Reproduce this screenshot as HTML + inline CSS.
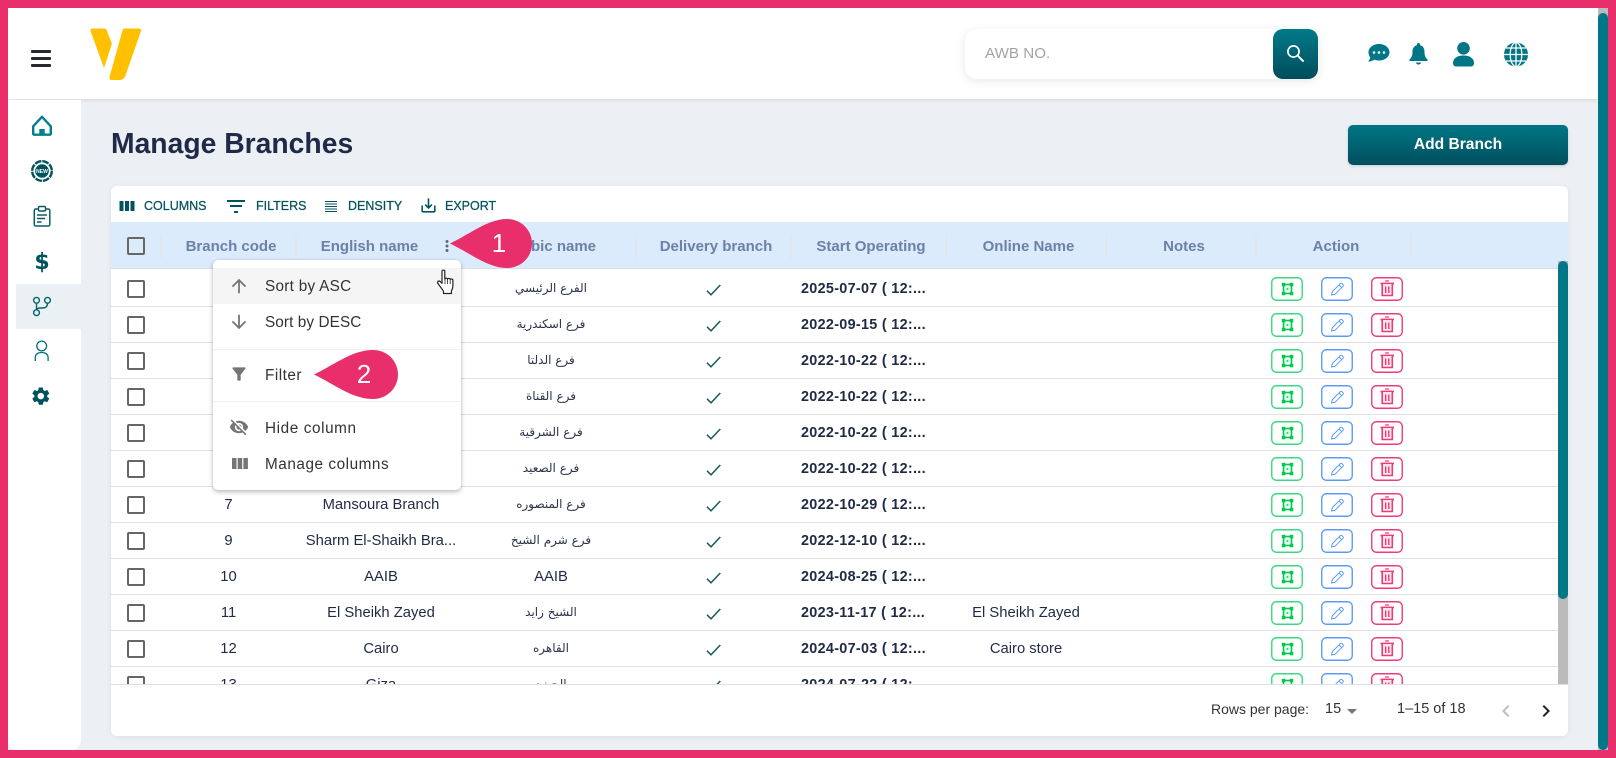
<!DOCTYPE html>
<html><head><meta charset="utf-8"><title>Manage Branches</title>
<style>
*{box-sizing:border-box;margin:0;padding:0}
html,body{width:1616px;height:758px;overflow:hidden;background:#ecf0f4;font-family:"Liberation Sans",sans-serif}
.a{position:absolute}
svg{display:block;overflow:visible}
.tb{position:absolute;top:197px;font-size:12.5px;font-weight:400;color:#03535f;line-height:18px;white-space:nowrap;-webkit-text-stroke:.25px #03535f}
.th{position:absolute;top:222px;height:47px;line-height:50px;text-align:center;font-size:15px;font-weight:700;color:#6d80a8;white-space:nowrap}
.sp{position:absolute;top:234px;width:2px;height:24px;background:#e0e6ee}
.r{position:absolute;left:0;width:1447px;height:36px;border-bottom:1px solid #e0e0e0;font-size:14.8px;color:#1f2a44;line-height:37px;white-space:nowrap}
.r span{position:absolute;top:0;text-align:center}
.cb{position:absolute;width:18px;height:18px;border:2px solid #666;border-radius:2px;background:#fff}
.r .cb{left:16px;top:9px}
.c1{left:50px;width:135px}.c2{left:185px;width:170px}
.r .c3{top:-1px;left:355px;width:170px;font-family:"DejaVu Sans",sans-serif;font-size:12px;color:#2a3348}
.r .c3.e{top:0;font-family:"Liberation Sans",sans-serif;font-size:14.8px;color:#1f2a44}
.c5{left:690px;font-weight:700;text-align:left!important;font-size:14.4px;letter-spacing:.3px}
.c6{left:835px;width:160px}
.r svg{position:absolute}
.ck{left:595px;top:13px}
.bg,.bb,.br{top:6px}
.bg{left:1160px}.bb{left:1210px}.br{left:1260px}
.m{position:absolute;left:265px;font-size:15.3px;color:#333;line-height:20px;white-space:nowrap}
.mi{position:absolute;left:227px}
</style></head>
<body>
<svg width="0" height="0" style="position:absolute">
<defs>
<symbol id="g" viewBox="0 0 32 24"><rect x=".75" y=".75" width="30.5" height="22.5" rx="4.5" fill="#fff" stroke="#3ad880" stroke-width="1.4"/><rect x="12.5" y="7.5" width="8" height="9" fill="#e8fbf0" stroke="#00c853" stroke-width="1.6"/><rect x="10.8" y="5.8" width="3.5" height="3.5" fill="#00c853"/><rect x="18.8" y="5.8" width="3.5" height="3.5" fill="#00c853"/><rect x="10.8" y="14.8" width="3.5" height="3.5" fill="#00c853"/><rect x="18.8" y="14.8" width="3.5" height="3.5" fill="#00c853"/><rect x="15.7" y="11.2" width="1.6" height="1.6" fill="#00c853"/></symbol>
<symbol id="b" viewBox="0 0 32 24"><rect x=".75" y=".75" width="30.5" height="22.5" rx="4.5" fill="#fff" stroke="#5c9cf6" stroke-width="1.4"/><path d="M10.5 18l.8-3.4 8-8a1.2 1.2 0 0 1 1.7 0l1 1a1.2 1.2 0 0 1 0 1.7l-8 8zM18 8l2.8 2.8" fill="none" stroke="#5c9cf6" stroke-width="1"/></symbol>
<symbol id="t" viewBox="0 0 32 24"><rect x=".75" y=".75" width="30.5" height="22.5" rx="4.5" fill="#fff" stroke="#f03a78" stroke-width="1.4"/><path d="M14 4h4" stroke="#f03a78" stroke-width="1.2"/><path d="M9.5 6.5h13.500" stroke="#f03a78" stroke-width="1.8"/><path d="M11.2 7v11.500h10.100V7" fill="#fde7ef" stroke="#f03a78" stroke-width="1.6"/><path d="M14.7 9.5v6.500M17.8 9.5v6.500" stroke="#f03a78" stroke-width="1.4"/></symbol>
<symbol id="c" viewBox="0 0 15 12"><path d="M1 6.8l4 4L14.3 1" fill="none" stroke="#1c5a5a" stroke-width="1.5"/></symbol>
</defs>
</svg>

<!-- top bar -->
<div class="a" style="left:8px;top:8px;width:1590px;height:91px;background:#fff;box-shadow:0 1px 4px rgba(0,0,0,.1)"></div>
<div class="a" style="left:31px;top:50px;width:20px;height:3px;background:#262a30;border-radius:1px"></div>
<div class="a" style="left:31px;top:57px;width:20px;height:3px;background:#262a30;border-radius:1px"></div>
<div class="a" style="left:31px;top:64px;width:20px;height:3px;background:#262a30;border-radius:1px"></div>
<svg class="a" style="left:85px;top:24px" width="60" height="60" viewBox="85 24 60 60"><path d="M92 28.5h12.5a2 2 0 0 1 1.9 1.2l5.3 13.3a2 2 0 0 1 0 1.4L104 68 90.6 31.2a2 2 0 0 1 1.4-2.7z" fill="#ffc000"/><path d="M124.5 28.5h14.5a2 2 0 0 1 1.9 2.7L125.5 75.5c-.8 2.5-3 4.5-6 4.5h-8c-1.6 0-2.6-1.6-2-3L122.6 30a2 2 0 0 1 1.9-1.5z" fill="#ffc000"/></svg>

<div class="a" style="left:965px;top:29px;width:353px;height:50px;background:#fff;border-radius:12px;box-shadow:0 2px 10px rgba(0,0,0,.1)"></div>
<div class="a" style="left:985px;top:43px;font-size:15.2px;color:#a3a3a3;line-height:22px">AWB NO.</div>
<div class="a" style="left:1273px;top:29px;width:45px;height:50px;border-radius:10px;background:linear-gradient(180deg,#007a8a,#004d5a)"></div>
<svg class="a" style="left:1284px;top:42px" width="24" height="24" viewBox="0 0 24 24"><circle cx="9.500" cy="9.500" r="5.600" fill="none" stroke="#fff" stroke-width="1.700"/><path d="M13.600 13.600l6 6" stroke="#fff" stroke-width="1.900"/></svg>

<svg class="a" style="left:1360px;top:37px" width="170" height="36" viewBox="1360 36 170 36" fill="#007686">
<path d="M1379 43c5.800 0 10.500 3.700 10.500 8.200s-4.700 8.300-10.500 8.300c-1.700 0-3.300-.3-4.700-.9-2 1.300-4 1.900-6.300 2 1.300-1.300 2-2.700 2.300-4.200-1.100-1.400-1.800-3.200-1.800-5.200 0-4.500 4.700-8.200 10.500-8.200z"/>
<circle cx="1374" cy="51.500" r="1.300" fill="#fff"/><circle cx="1379" cy="51.500" r="1.300" fill="#fff"/><circle cx="1384" cy="51.500" r="1.300" fill="#fff"/>
<path d="M1418.500 42c1 0 1.700.8 1.700 1.800v.5c2.800.8 4.300 3.300 4.300 6.200 0 4 .8 5.800 3 8v1.500h-18v-1.500c2.200-2.200 3-4 3-8 0-2.900 1.500-5.400 4.300-6.200v-.5c0-1 .7-1.800 1.700-1.800zM1416 61.500h5c0 1.100-1.100 2-2.500 2s-2.500-.9-2.500-2z"/>
<circle cx="1463.500" cy="47.300" r="6.300"/>
<path d="M1453 62c0-4.500 4-7.500 10.500-7.500s10.500 3 10.500 7.500c0 2-1.200 3.500-3 3.500h-15c-1.800 0-3-1.500-3-3.500z"/>
<circle cx="1516" cy="53.500" r="12"/>
<g fill="none" stroke="#fff" stroke-width="1.300"><path d="M1516 41.500v24M1504 53.500h24M1506 47h20M1506 60h20"/><ellipse cx="1516" cy="53.500" rx="5.800" ry="12"/></g>
</svg>

<div class="a" style="left:1598px;top:8px;width:10px;height:742px;background:#bbb"></div>
<div class="a" style="left:1598px;top:13px;width:10px;height:737px;background:#007686;border-radius:5px"></div>

<!-- sidebar -->
<div class="a" style="left:8px;top:100px;width:73px;height:650px;background:#fff;border-radius:0 0 10px 10px"></div>
<div class="a" style="left:16px;top:284px;width:65px;height:45px;background:#ebf0f4"></div>
<svg class="a" style="left:8px;top:100px" width="73" height="320" viewBox="8 100 73 320">
<path d="M33.200 126.300L42 116.800l8.800 9.500v7.500c0 .5-.4 .9-.9 .9H34.100c-.5 0-.9-.4-.9-.9z" fill="none" stroke="#00808f" stroke-width="2.400" stroke-linejoin="round"/><rect x="39.300" y="129" width="5.400" height="5.500" fill="#00808f"/>
<circle cx="42" cy="171" r="9.800" fill="none" stroke="#00525f" stroke-width="2.400" stroke-dasharray="6.700 1"/><circle cx="42" cy="171" r="6.800" fill="#00525f"/><text x="42" y="172.800" text-anchor="middle" font-size="5" font-weight="700" fill="#fff" font-family="Liberation Sans,sans-serif">NEW</text>
<rect x="34.300" y="209" width="15.500" height="17" rx="1.500" fill="none" stroke="#0b5a68" stroke-width="1.500"/><rect x="38.500" y="206.500" width="7" height="4.500" rx="1" fill="#fff" stroke="#0b5a68" stroke-width="1.400"/><path d="M37 215h10M37 218.500h8M37 222h4.500" stroke="#0b5a68" stroke-width="1.400"/>
<text x="42" y="269" text-anchor="middle" font-size="22" font-weight="700" fill="#00525f" font-family="DejaVu Sans,sans-serif">$</text>
<g fill="none" stroke="#00666f" stroke-width="1.400"><circle cx="36.500" cy="300.300" r="2.900"/><circle cx="47.500" cy="300.300" r="2.900"/><circle cx="36.500" cy="312.700" r="2.900"/><path d="M36.500 303.300v6.500M47.500 303.300c0 3.700-2 4.700-5 4.700h-2.500c-2.300 0-3.500 1-3.500 2"/></g>
<g fill="none" stroke="#007080" stroke-width="1.300"><circle cx="41.700" cy="346" r="4.900"/><path d="M35.300 361v-3.500c0-3.200 2.700-5 6.400-5s6.400 1.800 6.400 5v3.500"/></g>
<g transform="translate(30,385.300) scale(.9)"><path fill="#00525f" d="M19.140 12.940c.04-.3.06-.61.06-.94 0-.32-.02-.64-.07-.94l2.030-1.580c.18-.14.23-.41.12-.61l-1.920-3.320c-.12-.22-.37-.29-.59-.22l-2.390.96c-.5-.38-1.030-.7-1.620-.94l-.36-2.540c-.04-.24-.24-.41-.48-.41h-3.840c-.24 0-.43.17-.47.41l-.36 2.540c-.59.24-1.130.57-1.620.94l-2.390-.96c-.22-.08-.47 0-.59.22L2.740 8.870c-.12.21-.08.47.12.61l2.030 1.580c-.05.3-.09.63-.09.94s.02.64.07.94l-2.030 1.580c-.18.14-.23.41-.12.61l1.920 3.320c.12.22.37.29.59.22l2.390-.96c.5.38 1.030.7 1.620.94l.36 2.540c.05.24.24.41.48.41h3.840c.24 0 .44-.17.47-.41l.36-2.540c.59-.24 1.130-.56 1.620-.94l2.390.96c.22.08.47 0 .59-.22l1.920-3.320c.12-.22.07-.47-.12-.61l-2.010-1.580zM12 15.600c-1.980 0-3.600-1.620-3.600-3.600s1.620-3.600 3.600-3.600 3.600 1.620 3.600 3.600-1.620 3.600-3.600 3.600z"/></g>
</svg>

<!-- page head -->
<div class="a" style="left:111px;top:125px;font-size:28.3px;font-weight:700;color:#1f2a48;line-height:36px;white-space:nowrap">Manage Branches</div>
<div class="a" style="left:1348px;top:125px;width:220px;height:40px;border-radius:5px;background:linear-gradient(180deg,#007686,#004f5c);color:#fff;font-size:15.6px;font-weight:700;line-height:40px;text-align:center;box-shadow:0 1px 3px rgba(0,0,0,.15)">Add Branch</div>

<!-- table card -->
<div class="a" style="left:111px;top:186px;width:1457px;height:550px;background:#fff;border-radius:6px;box-shadow:0 1px 6px rgba(0,0,0,.07)"></div>

<!-- toolbar -->
<svg class="a" style="left:119px;top:201px" width="16" height="10"><path fill="#03535f" d="M.5 0h4v10h-4zM6 0h4v10H6zM11.500 0h4v10h-4z"/></svg>
<div class="tb" style="left:144px">COLUMNS</div>
<svg class="a" style="left:224px;top:194px" width="24" height="24" viewBox="0 0 24 24"><path fill="#03535f" d="M10 19h4v-2h-4v2zM3 6v2h18V6H3zm3 7h12v-2H6v2z"/></svg>
<div class="tb" style="left:256px">FILTERS</div>
<svg class="a" style="left:321px;top:196px" width="20" height="20" viewBox="0 0 20 20"><path fill="none" stroke="#03535f" stroke-width="1.100" d="M4 5.500h12M4 8h12M4 10.500h12M4 13h12M4 15.500h12"/></svg>
<div class="tb" style="left:348px">DENSITY</div>
<svg class="a" style="left:419px;top:196px" width="19" height="19" viewBox="0 0 24 24"><path fill="#03535f" d="M19 12v7H5v-7H3v7c0 1.100.9 2 2 2h14c1.100 0 2-.9 2-2v-7h-2zm-6 .67l2.590-2.580L17 11.500l-5 5-5-5 1.410-1.410L11 12.670V3h2z"/></svg>
<div class="tb" style="left:445px">EXPORT</div>

<!-- header -->
<div class="a" style="left:111px;top:222px;width:1457px;height:47px;background:#dbebfc;border-bottom:1px solid #d5dfe9"></div>
<div class="cb" style="left:127px;top:237px;background:transparent"></div>
<div class="sp" style="left:160px"></div><div class="sp" style="left:295px"></div><div class="sp" style="left:465px"></div><div class="sp" style="left:635px"></div><div class="sp" style="left:790px"></div><div class="sp" style="left:945px"></div><div class="sp" style="left:1105px"></div><div class="sp" style="left:1255px"></div><div class="sp" style="left:1410px"></div>
<div class="th" style="left:161px;width:140px">Branch code</div>
<div class="th" style="left:296px;width:147px">English name</div>
<div class="th" style="left:466px;width:170px">Arabic name</div>
<div class="th" style="left:636px;width:160px">Delivery branch</div>
<div class="th" style="left:791px;width:160px">Start Operating</div>
<div class="th" style="left:946px;width:165px">Online Name</div>
<div class="th" style="left:1106px;width:156px">Notes</div>
<div class="th" style="left:1256px;width:160px">Action</div>
<svg class="a" style="left:444px;top:239px" width="6" height="14"><circle cx="3" cy="2.500" r="1.500" fill="#5c6a85"/><circle cx="3" cy="7" r="1.500" fill="#5c6a85"/><circle cx="3" cy="11.500" r="1.500" fill="#5c6a85"/></svg>

<!-- rows -->
<div class="a" style="left:111px;top:270px;width:1447px;height:414px;overflow:hidden;background:#fff">
<div class="r" style="top:1px"><i class="cb"></i><span class="c3">الفرع الرئيسي</span><svg class="ck" width="15" height="12"><use href="#c"/></svg><span class="c5">2025-07-07 ( 12:...</span><svg class="bg" width="32" height="24"><use href="#g"/></svg><svg class="bb" width="32" height="24"><use href="#b"/></svg><svg class="br" width="32" height="24"><use href="#t"/></svg></div>
<div class="r" style="top:37px"><i class="cb"></i><span class="c3">فرع اسكندرية</span><svg class="ck" width="15" height="12"><use href="#c"/></svg><span class="c5">2022-09-15 ( 12:...</span><svg class="bg" width="32" height="24"><use href="#g"/></svg><svg class="bb" width="32" height="24"><use href="#b"/></svg><svg class="br" width="32" height="24"><use href="#t"/></svg></div>
<div class="r" style="top:73px"><i class="cb"></i><span class="c3">فرع الدلتا</span><svg class="ck" width="15" height="12"><use href="#c"/></svg><span class="c5">2022-10-22 ( 12:...</span><svg class="bg" width="32" height="24"><use href="#g"/></svg><svg class="bb" width="32" height="24"><use href="#b"/></svg><svg class="br" width="32" height="24"><use href="#t"/></svg></div>
<div class="r" style="top:109px"><i class="cb"></i><span class="c3">فرع القناة</span><svg class="ck" width="15" height="12"><use href="#c"/></svg><span class="c5">2022-10-22 ( 12:...</span><svg class="bg" width="32" height="24"><use href="#g"/></svg><svg class="bb" width="32" height="24"><use href="#b"/></svg><svg class="br" width="32" height="24"><use href="#t"/></svg></div>
<div class="r" style="top:145px"><i class="cb"></i><span class="c3">فرع الشرقية</span><svg class="ck" width="15" height="12"><use href="#c"/></svg><span class="c5">2022-10-22 ( 12:...</span><svg class="bg" width="32" height="24"><use href="#g"/></svg><svg class="bb" width="32" height="24"><use href="#b"/></svg><svg class="br" width="32" height="24"><use href="#t"/></svg></div>
<div class="r" style="top:181px"><i class="cb"></i><span class="c3">فرع الصعيد</span><svg class="ck" width="15" height="12"><use href="#c"/></svg><span class="c5">2022-10-22 ( 12:...</span><svg class="bg" width="32" height="24"><use href="#g"/></svg><svg class="bb" width="32" height="24"><use href="#b"/></svg><svg class="br" width="32" height="24"><use href="#t"/></svg></div>
<div class="r" style="top:217px"><i class="cb"></i><span class="c1">7</span><span class="c2">Mansoura Branch</span><span class="c3">فرع المنصوره</span><svg class="ck" width="15" height="12"><use href="#c"/></svg><span class="c5">2022-10-29 ( 12:...</span><svg class="bg" width="32" height="24"><use href="#g"/></svg><svg class="bb" width="32" height="24"><use href="#b"/></svg><svg class="br" width="32" height="24"><use href="#t"/></svg></div>
<div class="r" style="top:253px"><i class="cb"></i><span class="c1">9</span><span class="c2">Sharm El-Shaikh Bra...</span><span class="c3">فرع شرم الشيخ</span><svg class="ck" width="15" height="12"><use href="#c"/></svg><span class="c5">2022-12-10 ( 12:...</span><svg class="bg" width="32" height="24"><use href="#g"/></svg><svg class="bb" width="32" height="24"><use href="#b"/></svg><svg class="br" width="32" height="24"><use href="#t"/></svg></div>
<div class="r" style="top:289px"><i class="cb"></i><span class="c1">10</span><span class="c2">AAIB</span><span class="c3 e">AAIB</span><svg class="ck" width="15" height="12"><use href="#c"/></svg><span class="c5">2024-08-25 ( 12:...</span><svg class="bg" width="32" height="24"><use href="#g"/></svg><svg class="bb" width="32" height="24"><use href="#b"/></svg><svg class="br" width="32" height="24"><use href="#t"/></svg></div>
<div class="r" style="top:325px"><i class="cb"></i><span class="c1">11</span><span class="c2">El Sheikh Zayed</span><span class="c3">الشيخ زايد</span><svg class="ck" width="15" height="12"><use href="#c"/></svg><span class="c5">2023-11-17 ( 12:...</span><span class="c6">El Sheikh Zayed</span><svg class="bg" width="32" height="24"><use href="#g"/></svg><svg class="bb" width="32" height="24"><use href="#b"/></svg><svg class="br" width="32" height="24"><use href="#t"/></svg></div>
<div class="r" style="top:361px"><i class="cb"></i><span class="c1">12</span><span class="c2">Cairo</span><span class="c3">القاهره</span><svg class="ck" width="15" height="12"><use href="#c"/></svg><span class="c5">2024-07-03 ( 12:...</span><span class="c6">Cairo store</span><svg class="bg" width="32" height="24"><use href="#g"/></svg><svg class="bb" width="32" height="24"><use href="#b"/></svg><svg class="br" width="32" height="24"><use href="#t"/></svg></div>
<div class="r" style="top:397px"><i class="cb"></i><span class="c1">13</span><span class="c2">Giza</span><span class="c3">الجيزه</span><svg class="ck" width="15" height="12"><use href="#c"/></svg><span class="c5">2024-07-22 ( 12:...</span><svg class="bg" width="32" height="24"><use href="#g"/></svg><svg class="bb" width="32" height="24"><use href="#b"/></svg><svg class="br" width="32" height="24"><use href="#t"/></svg></div>
</div>

<!-- table scrollbar -->
<div class="a" style="left:1558px;top:261px;width:10px;height:423px;background:#bbb"></div>
<div class="a" style="left:1558px;top:261px;width:10px;height:338px;background:#007686;border-radius:5px"></div>

<!-- footer -->
<div class="a" style="left:111px;top:684px;width:1457px;height:1px;background:#e0e0e0"></div>
<div class="a" style="left:1211px;top:699px;font-size:14px;color:#333;line-height:20px;white-space:nowrap">Rows per page:</div>
<div class="a" style="left:1325px;top:699px;font-size:14.500px;color:#333;line-height:20px">15</div>
<div class="a" style="left:1347px;top:709px;width:0;height:0;border-left:5px solid transparent;border-right:5px solid transparent;border-top:5px solid #757575"></div>
<div class="a" style="left:1397px;top:699px;font-size:14.500px;color:#333;line-height:20px;white-space:nowrap">1–15 of 18</div>
<svg class="a" style="left:1494px;top:699px" width="24" height="24" viewBox="0 0 24 24"><path fill="#bdbdbd" d="M15.410 7.410L14 6l-6 6 6 6 1.410-1.410L10.830 12z"/></svg>
<svg class="a" style="left:1534px;top:699px" width="24" height="24" viewBox="0 0 24 24"><path fill="#222" d="M10 6L8.590 7.410 13.170 12l-4.580 4.590L10 18l6-6z"/></svg>

<!-- column menu -->
<div class="a" style="left:213px;top:260px;width:248px;height:230px;background:#fff;border-radius:5px;box-shadow:0 2px 5px rgba(0,0,0,.25),0 0 3px rgba(0,0,0,.08)"></div>
<div class="a" style="left:213px;top:268px;width:248px;height:36px;background:#f5f5f5"></div>
<div class="a" style="left:213px;top:349px;width:248px;height:1px;background:#f0f0f0"></div>
<div class="a" style="left:213px;top:401px;width:248px;height:1px;background:#f0f0f0"></div>
<svg class="mi" style="top:274px" width="24" height="24" viewBox="0 0 24 24"><path fill="#757575" transform="translate(1.200,1.200) scale(.9)" d="M4 12l1.410 1.410L11 7.830V20h2V7.830l5.580 5.590L20 12l-8-8-8 8z"/></svg>
<svg class="mi" style="top:310px" width="24" height="24" viewBox="0 0 24 24"><path fill="#757575" transform="translate(1.200,1.200) scale(.9)" d="M20 12l-1.410-1.410L13 16.170V4h-2v12.170l-5.580-5.590L4 12l8 8 8-8z"/></svg>
<svg class="mi" style="left:229px;top:364px" width="20" height="20" viewBox="0 0 24 24"><path fill="#757575" d="M4.250 5.610C6.270 8.200 10 13 10 13v6c0 .55.45 1 1 1h2c.55 0 1-.45 1-1v-6s3.720-4.800 5.740-7.390c.51-.66.04-1.610-.79-1.610H5.040c-.83 0-1.300.95-.79 1.610z"/></svg>
<svg class="mi" style="left:229px;top:417px" width="20" height="20" viewBox="0 0 24 24"><path fill="#757575" d="M12 7c2.760 0 5 2.240 5 5 0 .65-.13 1.260-.36 1.830l2.920 2.920c1.510-1.260 2.700-2.890 3.430-4.750-1.730-4.390-6-7.500-11-7.500-1.400 0-2.740.25-3.980.7l2.160 2.160C10.740 7.130 11.350 7 12 7zM2 4.270l2.280 2.280.46.46C3.080 8.300 1.780 10.020 1 12c1.730 4.390 6 7.500 11 7.500 1.550 0 3.030-.3 4.380-.84l.42.42L19.730 22 21 20.730 3.270 3 2 4.270zM7.530 9.800l1.550 1.550c-.05.21-.08.43-.08.65 0 1.660 1.340 3 3 3 .22 0 .44-.03.65-.08l1.550 1.550c-.67.33-1.410.53-2.200.53-2.760 0-5-2.240-5-5 0-.79.2-1.530.53-2.200zm4.310-.78l3.150 3.150.02-.16c0-1.660-1.340-3-3-3l-.17.01z"/></svg>
<svg class="mi" style="left:232px;top:458px" width="16" height="11"><path fill="#757575" d="M0 0h4.500v11H0zM5.700 0h4.500v11H5.700zM11.400 0h4.500v11h-4.500z"/></svg>
<div class="m" style="top:277px;letter-spacing:.28px">Sort by ASC</div>
<div class="m" style="top:313px;letter-spacing:.1px">Sort by DESC</div>
<div class="m" style="top:366px;letter-spacing:.5px">Filter</div>
<div class="m" style="top:419px;letter-spacing:.6px">Hide column</div>
<div class="m" style="top:455px;letter-spacing:.55px">Manage columns</div>

<!-- cursor -->
<svg class="a" style="left:436px;top:269px" width="22" height="27" viewBox="0 0 22 27"><path d="M6 2.200c0-1.500 2.800-1.500 2.800 0V10c0-1 2.600-1.200 2.700.2 0-1 2.600-1.100 2.700.3.200-.8 2.600-.8 2.700.8v5.700c0 2.200-.7 3.500-1.500 5v2.500H7.500v-2.300L2 14.500c-1.200-1.800.8-3.200 2.200-2L6 14.300z" fill="#fff" stroke="#222" stroke-width="1.200" stroke-linejoin="round"/><path d="M9 10v5M11.500 10.500v4.500M14.200 11v4" stroke="#222" stroke-width=".8"/></svg>

<!-- callouts -->
<svg class="a" style="left:450px;top:219px" width="82" height="49" viewBox="0 0 82 49"><path d="M0 24.500C20 15 38 0 57 0c14 0 25 11 25 24.500S71 49 57 49C38 49 20 34 0 24.500z" fill="#e92e6c"/></svg>
<div class="a" style="left:484px;top:229px;width:30px;text-align:center;font-size:26px;color:#fff;line-height:28px">1</div>
<svg class="a" style="left:314px;top:350px" width="84" height="49" viewBox="0 0 84 49"><path d="M0 24.500C20 15 38 0 59 0c14 0 25 11 25 24.500S73 49 59 49C38 49 20 34 0 24.500z" fill="#e92e6c"/></svg>
<div class="a" style="left:349px;top:360px;width:30px;text-align:center;font-size:26px;color:#fff;line-height:28px">2</div>

<!-- pink frame -->
<div class="a" style="left:0;top:0;width:1616px;height:8px;background:#e92e6c"></div>
<div class="a" style="left:0;top:750px;width:1616px;height:8px;background:#e92e6c"></div>
<div class="a" style="left:0;top:0;width:8px;height:758px;background:#e92e6c"></div>
<div class="a" style="left:1608px;top:0;width:8px;height:758px;background:#e92e6c"></div>
</body></html>
